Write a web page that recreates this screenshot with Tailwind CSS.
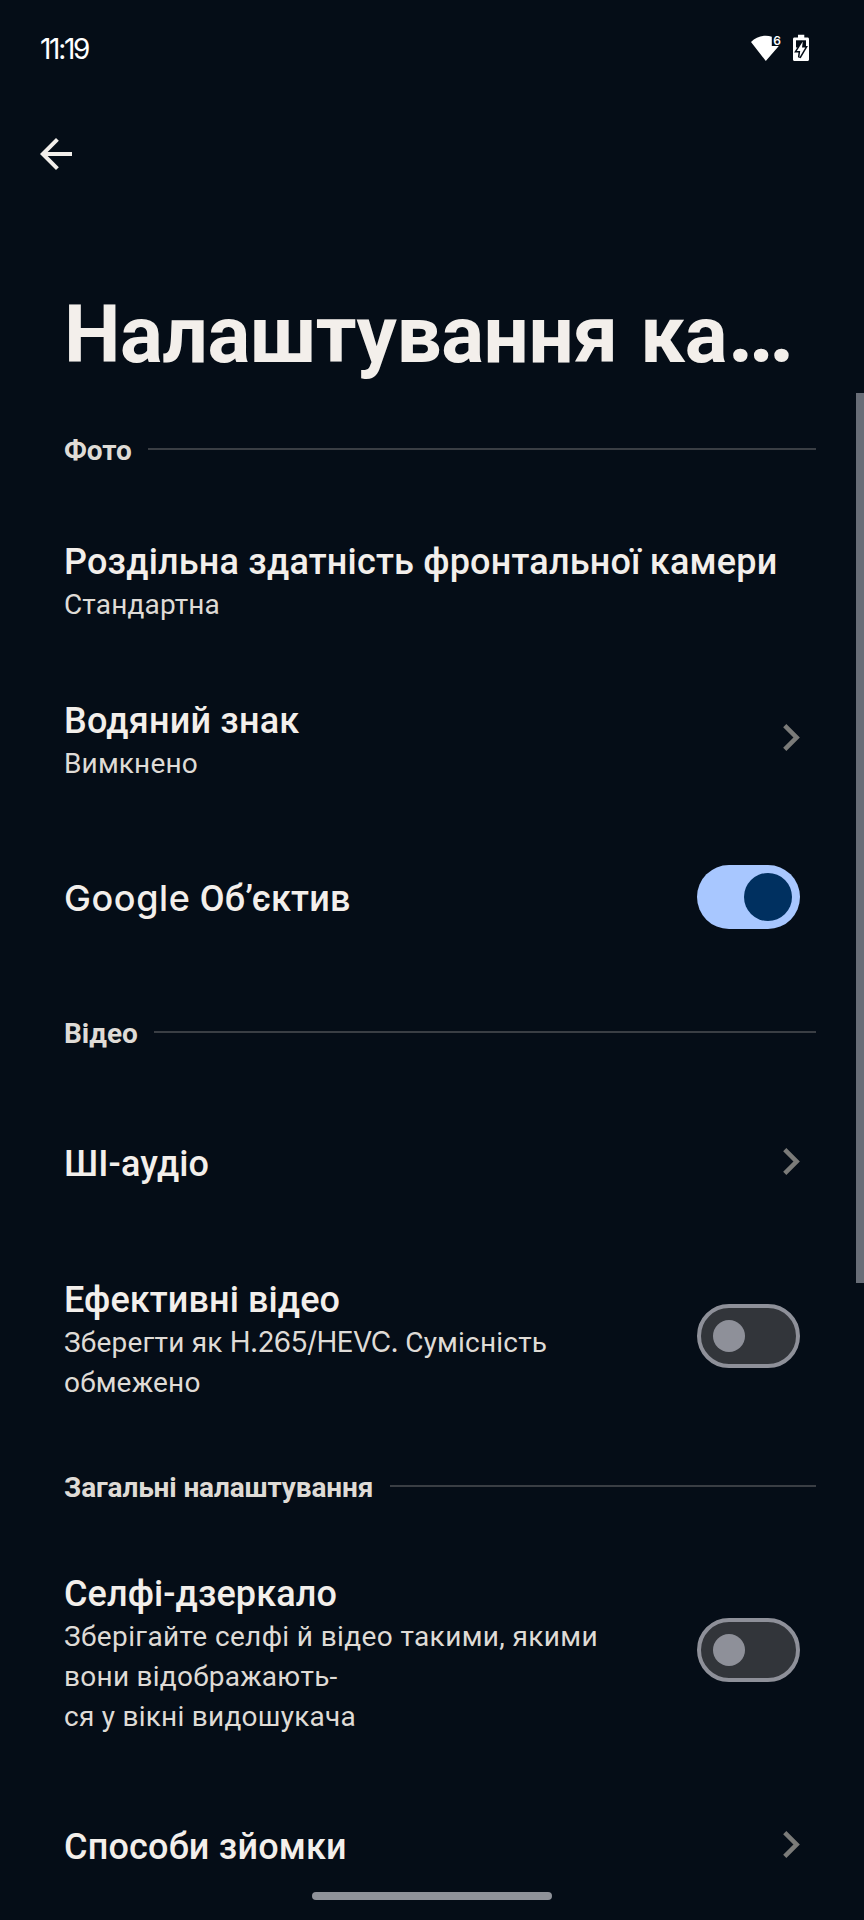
<!DOCTYPE html>
<html lang="uk">
<head>
    <meta charset="UTF-8">
    <meta name="viewport" content="width=device-width, initial-scale=1.0">
    <title>Налаштування камери</title>
    <!-- Tailwind CSS -->
    <script src="https://cdn.jsdelivr.net/npm/@tailwindcss/browser@4"></script>
</head>
<body class="relative h-[1920px] overflow-hidden bg-[#050d17] font-[Roboto,sans-serif] text-[#f3efeb]">
    <!-- Status bar -->
    <div class="flex h-24 items-center justify-between pl-10 pr-[55px] text-white">
        <span class="mt-0.5 font-[Inter,sans-serif] text-[28px] tracking-[-2.3px]">11:19</span>
        <div class="flex items-center gap-[9px]">
            <svg class="h-7 w-[33px]" viewBox="0 0 33 28" fill="currentColor">
                <path d="M0 8C4 4 9 1.800 14.800 1.800c2.200 0 4.200.3 6 .9V12h7L14.800 27z" />
                <text x="22.300" y="10.500" font-family="Inter" font-size="12" font-weight="600">6</text>
            </svg>
            <svg class="h-7 w-4" viewBox="0 0 16 28" fill="currentColor">
                <path d="M5 .8h6.300v2.700H14.500c.9 0 1.500.6 1.500 1.500V25.500c0 .9-.6 1.500-1.500 1.500h-13C.6 27 0 26.400 0 25.500V5c0-.9.6-1.500 1.500-1.500H5z" />
                <path d="M3 6.300h10V13.500H3z" fill="#050d17" />
                <path d="M9.800 7.500 3.800 17h3.400L6.400 23.500 12.300 13.600H9z" stroke="#050d17" stroke-width="3" paint-order="stroke" />
            </svg>
        </div>
    </div>

    <!-- App bar -->
    <div class="flex h-[191px] items-start px-8 pt-[34px]">
        <svg class="size-12" viewBox="0 0 24 24" fill="currentColor">
            <path d="M20 11H7.830l5.590-5.590L12 4l-8 8 8 8 1.410-1.410L7.830 13H20v-2z" />
        </svg>
    </div>

    <main>
        <h1 class="h-24 whitespace-nowrap pl-16 text-[80px] leading-[96px] font-bold tracking-[-0.4px] [word-spacing:3px]">Налаштування ка<span class="text-[90px] leading-none tracking-normal">…</span></h1>

        <!-- Photo -->
        <div class="mt-[47px] flex h-10 items-center gap-4 pr-12 pl-16">
            <h2 class="mt-0.5 text-[28px] leading-10 font-bold text-[#dfdbd6]">Фото</h2>
            <div class="mb-[3px] h-0.5 flex-1 bg-[#3a3e44]"></div>
        </div>

        <div class="mt-8 flex h-[159px] items-center justify-between px-16">
            <div class="mt-0.5">
                <p class="text-[36px] leading-[45px] font-medium tracking-[0.2px]">Роздільна здатність фронтальної камери</p>
                <p class="text-[28px] leading-10 tracking-[0.15px] text-[#dfdbd6]">Стандартна</p>
            </div>
        </div>

        <div class="flex h-[159px] items-center justify-between px-16">
            <div class="mt-0.5">
                <p class="text-[36px] leading-[45px] font-medium tracking-[0.2px]">Водяний знак</p>
                <p class="text-[28px] leading-10 tracking-[0.15px] text-[#dfdbd6]">Вимкнено</p>
            </div>
            <svg class="mb-[6px] h-[27px] w-[17px] text-[#7b7b79]" viewBox="8.590 6 7.410 12" fill="currentColor">
                <path d="M10 6 8.590 7.410 13.170 12l-4.580 4.590L10 18l6-6z" />
            </svg>
        </div>

        <div class="flex h-[157px] items-center justify-between px-16">
            <p class="mt-px text-[36px] leading-[45px] font-medium tracking-[0.2px]"><span class="font-[Inter] tracking-[0.6px]">Google</span> Об’єктив</p>
            <div class="mb-[3px] flex h-16 w-[103px] items-center justify-end rounded-full bg-[#a8c7ff] px-2">
                <div class="size-12 rounded-full bg-[#003060]"></div>
            </div>
        </div>

        <!-- Video -->
        <div class="mt-9 flex h-10 items-center gap-4 pr-12 pl-16">
            <h2 class="mt-0.5 text-[28px] leading-10 font-bold text-[#dfdbd6]">Відео</h2>
            <div class="mb-[3px] h-0.5 flex-1 bg-[#3a3e44]"></div>
        </div>

        <div class="mt-8 flex h-[157px] items-center justify-between px-16">
            <p class="mt-0.5 text-[36px] leading-[45px] font-medium tracking-[0.1px]">ШІ-аудіо</p>
            <svg class="mb-[4px] h-[27px] w-[17px] text-[#7b7b79]" viewBox="8.590 6 7.410 12" fill="currentColor">
                <path d="M10 6 8.590 7.410 13.170 12l-4.580 4.590L10 18l6-6z" />
            </svg>
        </div>

        <div class="flex h-[195px] items-center justify-between px-16">
            <div class="mt-0.5">
                <p class="text-[36px] leading-[45px] font-medium tracking-[0.1px]">Ефективні відео</p>
                <p class="text-[28px] leading-10 tracking-[0.2px] text-[#dfdbd6]">Зберегти як <span class="font-[Inter] leading-none tracking-[-0.6px]">H.265/HEVC.</span> Сумісність<br>обмежено</p>
            </div>
            <div class="mb-[7px] flex h-16 w-[103px] items-center rounded-full border-4 border-[#8e9099] bg-[#32353a] px-3">
                <div class="size-8 rounded-full bg-[#8e9099]"></div>
            </div>
        </div>

        <!-- General -->
        <div class="mt-[30px] flex h-10 items-center gap-[17px] pr-12 pl-16">
            <h2 class="mt-0.5 text-[28px] leading-10 font-bold tracking-[-0.15px] text-[#dfdbd6]">Загальні налаштування</h2>
            <div class="mb-[3px] h-0.5 flex-1 bg-[#3a3e44]"></div>
        </div>

        <div class="mt-8 flex h-[229px] items-center justify-between px-16">
            <div class="mt-0.5">
                <p class="text-[36px] leading-[45px] font-medium tracking-[0.1px]">Селфі-дзеркало</p>
                <p class="text-[28px] leading-10 tracking-[0.25px] text-[#dfdbd6]"><span class="tracking-[0.37px]">Зберігайте селфі й відео такими, якими</span><br>вони відображають-<br>ся у вікні видошукача</p>
            </div>
            <div class="mb-[7px] flex h-16 w-[103px] items-center rounded-full border-4 border-[#8e9099] bg-[#32353a] px-3">
                <div class="size-8 rounded-full bg-[#8e9099]"></div>
            </div>
        </div>

        <div class="flex h-[157px] items-center justify-between px-16">
            <p class="mt-px text-[36px] leading-[45px] font-medium tracking-[0.2px]">Способи зйомки</p>
            <svg class="mb-[4px] h-[27px] w-[17px] text-[#7b7b79]" viewBox="8.590 6 7.410 12" fill="currentColor">
                <path d="M10 6 8.590 7.410 13.170 12l-4.580 4.590L10 18l6-6z" />
            </svg>
        </div>
    </main>

    <!-- Scrollbar -->
    <div class="absolute top-[393px] right-0 h-[890px] w-2 bg-[#686d77]"></div>

    <!-- Gesture bar -->
    <div class="absolute bottom-5 left-[312px] h-2 w-60 rounded-full bg-[#8f9299]"></div>
</body>
</html>
